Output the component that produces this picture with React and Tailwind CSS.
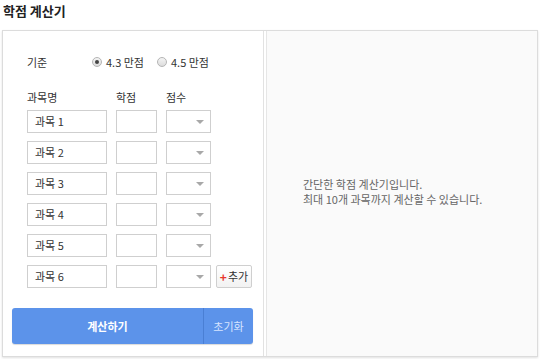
import React, { useState } from 'react';

const rows = ['과목 1', '과목 2', '과목 3', '과목 4', '과목 5', '과목 6'];

const Radio = ({ checked, label, onClick }) => (
  <label className="flex items-center cursor-pointer" onClick={onClick}>
    <span className="w-[10px] h-[10px] rounded-full border border-[#b5b5b5] bg-gradient-to-b from-[#f4f4f4] to-[#dcdcdc] flex items-center justify-center">
      {checked && <span className="w-[4px] h-[4px] rounded-full bg-[#444]" />}
    </span>
    <span className="ml-[4px] text-[#333]">{label}</span>
  </label>
);

export default function App() {
  const [scale, setScale] = useState('4.3');

  return (
    <div className="w-[540px] h-[359px] bg-white px-[2px] pt-[3px] text-[11px] text-[#333]" style={{ fontFamily: '"Noto Sans CJK KR", "Liberation Sans", sans-serif' }}>
      <h2 className="text-[13px] font-bold leading-[16px] pl-[1px] text-[#222]">학점 계산기</h2>

      <div className="mt-[11px] w-[536px] h-[327px] border border-[#dcdcdc] shadow-[0_1px_2px_rgba(0,0,0,0.12)] flex">
        <div className="w-[261px] bg-white border-r border-[#e2e2e2] flex flex-col">
          <div className="flex items-center h-[14px] mt-[24px] pl-[24px]">
            <span className="w-[65px]">기준</span>
            <Radio checked={scale === '4.3'} label="4.3 만점" onClick={() => setScale('4.3')} />
            <span className="w-[13px]" />
            <Radio checked={scale === '4.5'} label="4.5 만점" onClick={() => setScale('4.5')} />
          </div>

          <div className="flex items-center h-[14px] mt-[21px] pl-[24px]">
            <span className="w-[89px]">과목명</span>
            <span className="w-[50px]">학점</span>
            <span>점수</span>
          </div>

          <div className="flex flex-col gap-[8px] mt-[6px] pl-[24px]">
            {rows.map((name, i) => (
              <div key={name} className="flex items-center h-[23px]">
                <div className="w-[80px] h-[23px] border border-[#cfcfcf] flex items-center pl-[7px] text-[#333]">{name}</div>
                <div className="w-[41px] h-[23px] border border-[#cfcfcf] ml-[9px]" />
                <div className="w-[45px] h-[23px] border border-[#cfcfcf] ml-[9px] flex items-center justify-end pr-[6px]">
                  <span className="w-0 h-0 border-l-[4px] border-r-[4px] border-t-[4px] border-l-transparent border-r-transparent border-t-[#a8a8a8]" />
                </div>
                {i === rows.length - 1 && (
                  <button className="ml-[5px] w-[36px] h-[23px] border border-[#cfcfcf] rounded-[2px] bg-gradient-to-b from-white to-[#f2f2f2] flex items-center justify-center text-[#333] text-[11px]">
                    <span className="text-[#e8362c] font-bold text-[12px] leading-none mr-[1px]">+</span>추가
                  </button>
                )}
              </div>
            ))}
          </div>

          <div className="mt-[20px] ml-[9px] w-[241px] h-[36px] rounded-[3px] bg-[#5c93ea] flex shadow-[0_1px_1px_rgba(0,0,0,0.15)]">
            <button className="flex-1 flex items-center justify-center text-white font-bold text-[11px]">계산하기</button>
            <button className="w-[50px] border-l border-[#4a7fd4] flex items-center justify-center text-[#d6e4ff] text-[11px]">초기화</button>
          </div>
        </div>

        <div className="flex-1 ml-[2px] border-l border-[#e6e6e6] bg-[#fafafa] flex flex-col justify-center pl-[36px] pb-[4px] text-[#666] leading-[15px]">
          <p>간단한 학점 계산기입니다.</p>
          <p>최대 10개 과목까지 계산할 수 있습니다.</p>
        </div>
      </div>
    </div>
  );
}
